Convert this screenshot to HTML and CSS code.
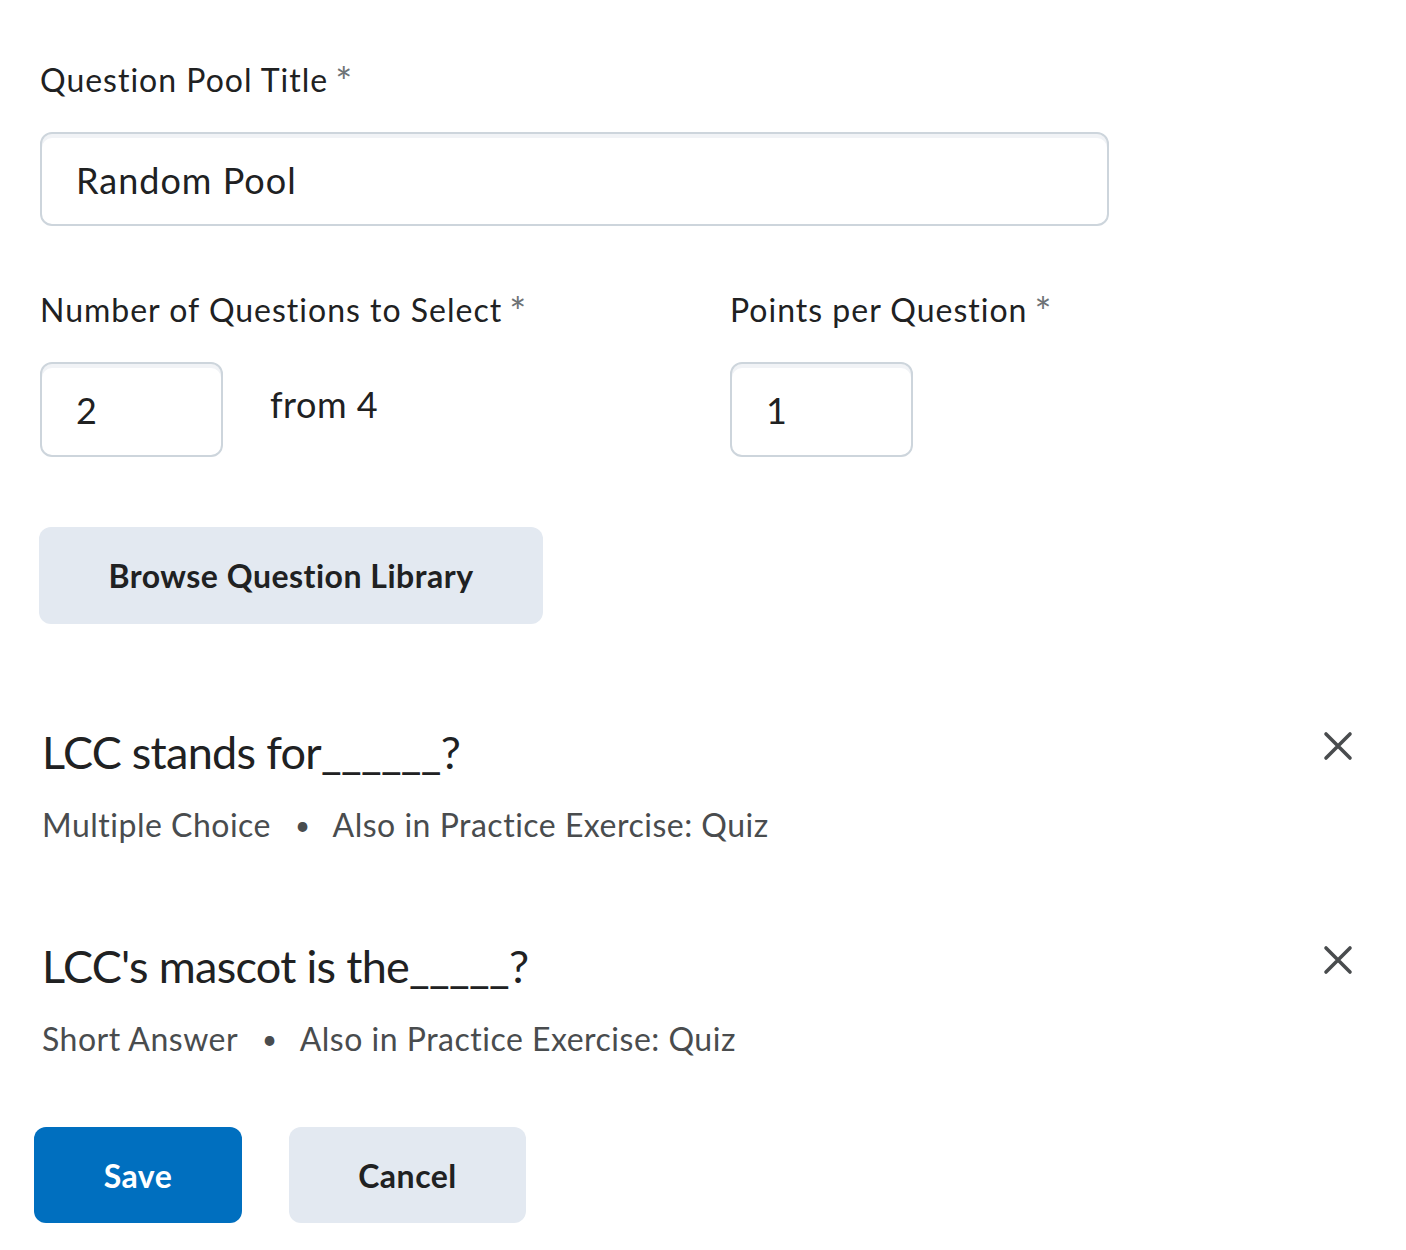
FILE: index.html
```html
<!DOCTYPE html>
<html>
<head>
<meta charset="utf-8">
<link rel="stylesheet" href="styles.css">
</head>
<body>
<main class="form">
  <div class="field field-title">
    <label class="label">Question Pool Title<span class="req">*</span></label>
    <div class="input input-wide">Random Pool</div>
  </div>

  <div class="row">
    <div class="field col-left">
      <label class="label">Number of Questions to Select<span class="req">*</span></label>
      <div class="inline">
        <div class="input input-small">2</div>
        <span class="from">from 4</span>
      </div>
    </div>
    <div class="field col-right">
      <label class="label">Points per Question<span class="req">*</span></label>
      <div class="input input-small">1</div>
    </div>
  </div>

  <button class="btn btn-secondary btn-browse">Browse Question Library</button>

  <ul class="questions">
    <li class="question">
      <div class="q-head">
        <h2 class="q-title">LCC stands for______?</h2>
        <span class="q-remove"><svg viewBox="0 0 30 30" width="30" height="30"><path d="M3 3 L27 27 M27 3 L3 27" stroke="#494c4e" stroke-width="3.6" stroke-linecap="round" fill="none"/></svg></span>
      </div>
      <div class="q-meta"><span>Multiple Choice</span><span class="dot">•</span><span>Also in Practice Exercise: Quiz</span></div>
    </li>
    <li class="question">
      <div class="q-head">
        <h2 class="q-title">LCC's mascot is the_____?</h2>
        <span class="q-remove"><svg viewBox="0 0 30 30" width="30" height="30"><path d="M3 3 L27 27 M27 3 L3 27" stroke="#494c4e" stroke-width="3.6" stroke-linecap="round" fill="none"/></svg></span>
      </div>
      <div class="q-meta"><span>Short Answer</span><span class="dot">•</span><span>Also in Practice Exercise: Quiz</span></div>
    </li>
  </ul>

  <div class="actions">
    <button class="btn btn-primary btn-save">Save</button>
    <button class="btn btn-secondary btn-cancel">Cancel</button>
  </div>
</main>
</body>
</html>
```

FILE: styles.css
```css
html, body {
  margin: 0;
  padding: 0;
  background: #ffffff;
}
body {
  font-family: Lato, "Open Sans", sans-serif;
  color: #202122;
}
.form {
  padding: 58px 0 0 40px;
  width: 1320px;
}
.label {
  display: block;
  font-size: 32px;
  line-height: 44px;
  height: 44px;
  letter-spacing: 1px;
  color: #202122;
}
.req {
  color: #6e7376;
  font-size: 40px;
  line-height: 0;
  margin-left: 7px;
  position: relative;
  top: 5px;
}
.input {
  box-sizing: border-box;
  border: 2px solid #cdd5dc;
  border-radius: 12px;
  background: #fff;
  box-shadow: inset 0 4px 0 0 #f1f3f6;
  font-size: 36px;
  color: #202122;
  display: flex;
  align-items: center;
  padding: 1px 34px 0;
  letter-spacing: 1px;
}
.input-wide {
  margin-top: 30px;
  width: 1069px;
  height: 94px;
}
.row {
  display: flex;
  margin-top: 62px;
}
.col-left { width: 690px; }
.inline {
  display: flex;
  align-items: flex-start;
}
.input-small {
  margin-top: 30px;
  width: 183px;
  height: 95px;
}
.from {
  font-size: 36px;
  margin-left: 47px;
  margin-top: 54px;
  line-height: 1;
  letter-spacing: 0.5px;
}
.btn {
  font-family: Lato, "Open Sans", sans-serif;
  font-weight: 700;
  font-size: 32px;
  letter-spacing: 0.5px;
  border: none;
  border-radius: 12px;
  cursor: pointer;
  display: flex;
  align-items: center;
  justify-content: center;
  padding: 0;
}
.btn-secondary {
  background: #e3e9f1;
  color: #202122;
}
.btn-primary {
  background: #006fbf;
  color: #ffffff;
}
.btn-browse {
  margin-top: 70px;
  margin-left: -1px;
  width: 504px;
  height: 97px;
}
.questions {
  list-style: none;
  margin: 0;
  padding: 0;
  margin-top: 100px;
}
.question {
  padding-left: 2px;
}
.question + .question {
  margin-top: 93px;
}
.q-head {
  display: flex;
  justify-content: space-between;
  align-items: flex-start;
  width: 1311px;
}
.q-title {
  margin: 0;
  font-weight: 400;
  font-size: 45px;
  line-height: 56px;
  letter-spacing: -0.7px;
  color: #202122;
}
.q-remove {
  display: block;
  width: 30px;
  height: 30px;
  margin-top: 7px;
}
.q-meta {
  margin-top: 25px;
  font-size: 32px;
  line-height: 40px;
  color: #494c4e;
  display: flex;
  letter-spacing: 0.5px;
}
.dot {
  margin: 0 22px 0 24px;
  font-size: 26px;
}
.actions {
  display: flex;
  gap: 47px;
  margin-top: 68px;
  margin-left: -6px;
}
.btn-save {
  width: 208px;
  height: 96px;
}
.btn-cancel {
  width: 237px;
  height: 96px;
}
```
